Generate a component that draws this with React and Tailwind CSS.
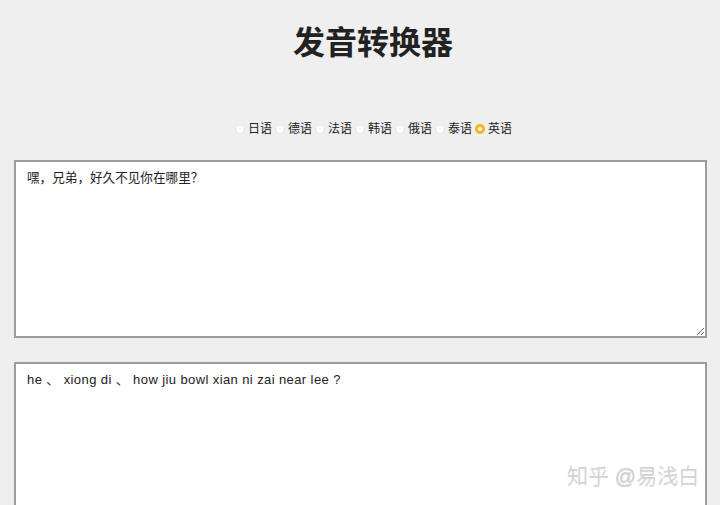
import React, { useState } from "react";

const langs = ["日语", "德语", "法语", "韩语", "俄语", "泰语", "英语"];

const font = "font-['Liberation_Sans','Noto_Sans_CJK_SC',sans-serif]";

export default function App() {
  const [lang, setLang] = useState("英语");

  return (
    <div className={`relative min-h-screen overflow-hidden bg-[#efefef] px-[14px] text-[#222] ${font}`}>
      <h1 className="mt-[24px] pl-[26px] text-center text-[32px] font-bold leading-[38px] text-[#222]">
        发音转换器
      </h1>

      <div className="mt-[59px] flex h-[16px] items-center justify-center pl-[30px] text-[12px] leading-[16px]">
        {langs.map((l) => (
          <label key={l} className="mr-[3px] flex cursor-pointer items-center" onClick={() => setLang(l)}>
            <span
              className={
                lang === l
                  ? "mr-[3px] box-border h-[10px] w-[10px] rounded-full border-[3px] border-[#f2b51c] bg-white"
                  : "mr-[3px] box-border h-[10px] w-[10px] rounded-full border border-[#e2e2e2] bg-white"
              }
            />
            <span>{l}</span>
          </label>
        ))}
      </div>

      <textarea
        className="mt-[23px] box-border block h-[178px] w-[693px] border-2 border-[#9c9c9c] bg-white px-[11px] py-[7px] text-[12.6px] leading-[18px] text-[#222] outline-none"
        defaultValue="嘿，兄弟，好久不见你在哪里？"
      />

      <textarea
        className="mt-[24px] box-border block h-[178px] w-[693px] border-2 border-[#9c9c9c] bg-white px-[11px] py-[7px] text-[13px] leading-[18px] tracking-[0.4px] text-[#222] outline-none"
        defaultValue="he 、 xiong di 、 how jiu bowl xian ni zai near lee ?"
      />

      <div className="pointer-events-none absolute left-[567px] top-[462px] text-[21px] font-light leading-[28px] text-[#d2d2d2] [text-shadow:0_1px_1px_rgba(0,0,0,0.18)]">
        知乎 @易浅白
      </div>
    </div>
  );
}
